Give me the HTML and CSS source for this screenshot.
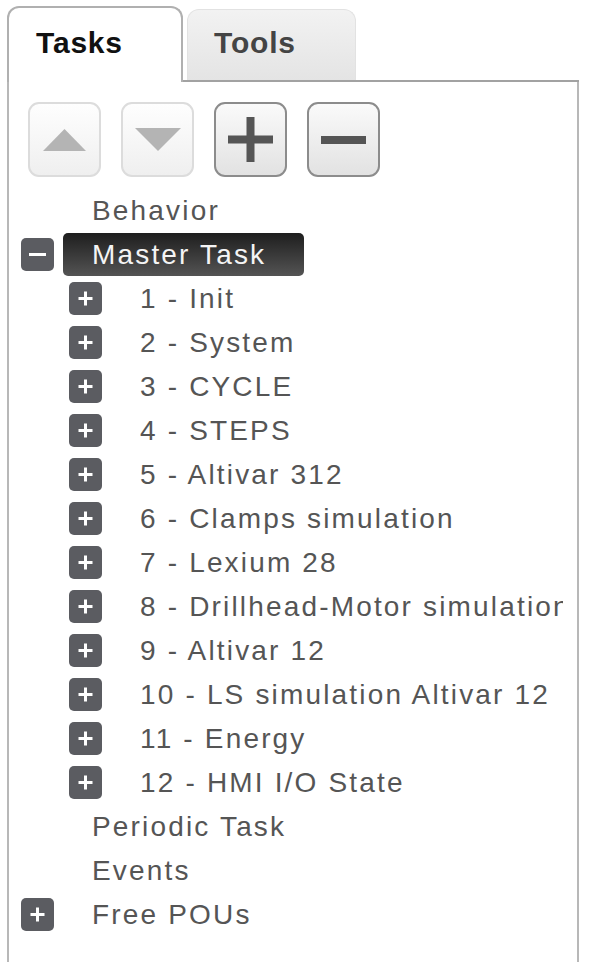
FILE: index.html
```html
<!DOCTYPE html>
<html>
<head>
<meta charset="utf-8">
<link rel="stylesheet" href="styles.css">
</head>
<body>
<div class="panel">
  <div class="tabbar">
    <div class="tab active">Tasks</div>
    <div class="tabrest">
      <div class="tab inactive">Tools</div>
    </div>
  </div>
  <div class="content">
    <div class="toolbar">
      <div class="btn disabled"><svg width="43" height="22" viewBox="0 0 43 22"><polygon points="0,22 43,22 21.5,0" fill="#b4b4b4"/></svg></div>
      <div class="btn disabled"><svg width="46" height="23" viewBox="0 0 46 23"><polygon points="0,0 46,0 23,23" fill="#b4b4b4"/></svg></div>
      <div class="btn enabled"><svg width="45" height="45" viewBox="0 0 45 45"><rect x="0" y="18.5" width="45" height="8" fill="#555"/><rect x="18.5" y="0" width="8" height="45" fill="#555"/></svg></div>
      <div class="btn enabled"><svg width="45" height="8" viewBox="0 0 45 8"><rect x="0" y="0" width="45" height="8" fill="#555"/></svg></div>
    </div>
    <div class="tree">
      <div class="row"><span class="spacer"></span><span class="label">Behavior</span></div>
      <div class="row"><span class="toggle"><svg width="33" height="33" viewBox="0 0 33 33"><path d="M8 16.5H25" stroke="#fff" stroke-width="3"/></svg></span><span class="label selected">Master Task</span></div>
      <div class="row l1"><span class="toggle"><svg width="33" height="33" viewBox="0 0 33 33"><path d="M9.5 16.5H23.5M16.5 9.5V23.5" stroke="#fff" stroke-width="3"/></svg></span><span class="label">1 - Init</span></div>
      <div class="row l1"><span class="toggle"><svg width="33" height="33" viewBox="0 0 33 33"><path d="M9.5 16.5H23.5M16.5 9.5V23.5" stroke="#fff" stroke-width="3"/></svg></span><span class="label">2 - System</span></div>
      <div class="row l1"><span class="toggle"><svg width="33" height="33" viewBox="0 0 33 33"><path d="M9.5 16.5H23.5M16.5 9.5V23.5" stroke="#fff" stroke-width="3"/></svg></span><span class="label">3 - CYCLE</span></div>
      <div class="row l1"><span class="toggle"><svg width="33" height="33" viewBox="0 0 33 33"><path d="M9.5 16.5H23.5M16.5 9.5V23.5" stroke="#fff" stroke-width="3"/></svg></span><span class="label">4 - STEPS</span></div>
      <div class="row l1"><span class="toggle"><svg width="33" height="33" viewBox="0 0 33 33"><path d="M9.5 16.5H23.5M16.5 9.5V23.5" stroke="#fff" stroke-width="3"/></svg></span><span class="label">5 - Altivar 312</span></div>
      <div class="row l1"><span class="toggle"><svg width="33" height="33" viewBox="0 0 33 33"><path d="M9.5 16.5H23.5M16.5 9.5V23.5" stroke="#fff" stroke-width="3"/></svg></span><span class="label">6 - Clamps simulation</span></div>
      <div class="row l1"><span class="toggle"><svg width="33" height="33" viewBox="0 0 33 33"><path d="M9.5 16.5H23.5M16.5 9.5V23.5" stroke="#fff" stroke-width="3"/></svg></span><span class="label">7 - Lexium 28</span></div>
      <div class="row l1"><span class="toggle"><svg width="33" height="33" viewBox="0 0 33 33"><path d="M9.5 16.5H23.5M16.5 9.5V23.5" stroke="#fff" stroke-width="3"/></svg></span><span class="label">8 - Drillhead-Motor simulation</span></div>
      <div class="row l1"><span class="toggle"><svg width="33" height="33" viewBox="0 0 33 33"><path d="M9.5 16.5H23.5M16.5 9.5V23.5" stroke="#fff" stroke-width="3"/></svg></span><span class="label">9 - Altivar 12</span></div>
      <div class="row l1"><span class="toggle"><svg width="33" height="33" viewBox="0 0 33 33"><path d="M9.5 16.5H23.5M16.5 9.5V23.5" stroke="#fff" stroke-width="3"/></svg></span><span class="label">10 - LS simulation Altivar 12</span></div>
      <div class="row l1"><span class="toggle"><svg width="33" height="33" viewBox="0 0 33 33"><path d="M9.5 16.5H23.5M16.5 9.5V23.5" stroke="#fff" stroke-width="3"/></svg></span><span class="label">11 - Energy</span></div>
      <div class="row l1"><span class="toggle"><svg width="33" height="33" viewBox="0 0 33 33"><path d="M9.5 16.5H23.5M16.5 9.5V23.5" stroke="#fff" stroke-width="3"/></svg></span><span class="label">12 - HMI I/O State</span></div>
      <div class="row"><span class="spacer"></span><span class="label">Periodic Task</span></div>
      <div class="row"><span class="spacer"></span><span class="label">Events</span></div>
      <div class="row"><span class="toggle"><svg width="33" height="33" viewBox="0 0 33 33"><path d="M9.5 16.5H23.5M16.5 9.5V23.5" stroke="#fff" stroke-width="3"/></svg></span><span class="label">Free POUs</span></div>
    </div>
  </div>
</div>
</body>
</html>
```
FILE: styles.css
```css
html, body {
  margin: 0;
  padding: 0;
  background: #fff;
}
body {
  font-family: "Liberation Sans", Arial, sans-serif;
}
.panel {
  margin: 6px 0 0 7px;
  width: 572px;
}
.tabbar {
  display: flex;
  height: 76px;
}
.tab {
  box-sizing: border-box;
  font-size: 30px;
  font-weight: bold;
  letter-spacing: 0.8px;
  line-height: 40px;
}
.tab.active {
  width: 176px;
  height: 76px;
  border: 2px solid #b0b0b0;
  border-bottom: none;
  border-radius: 12px 12px 0 0;
  background: #fff;
  color: #111;
  padding: 15px 0 0 27px;
}
.tabrest {
  flex: 1;
  display: flex;
  align-items: flex-end;
  padding-left: 4px;
  border-bottom: 2px solid #a2a2a2;
}
.tab.inactive {
  width: 169px;
  height: 71px;
  border: 1px solid #e2e2e2;
  border-bottom: none;
  border-radius: 12px 12px 0 0;
  background: linear-gradient(#f2f2f2, #e4e4e4);
  color: #444;
  padding: 13px 0 0 26px;
}
.content {
  box-sizing: border-box;
  height: 880px;
  border-left: 2px solid #b8b8b8;
  border-right: 2px solid #b8b8b8;
  padding-top: 20px;
}
.toolbar {
  display: flex;
  gap: 20px;
  padding-left: 19px;
}
.btn {
  box-sizing: border-box;
  width: 73px;
  height: 75px;
  border-radius: 11px;
  display: flex;
  align-items: center;
  justify-content: center;
}
.btn.disabled {
  border: 2px solid #dcdcdc;
  background: linear-gradient(#fefefe, #efefef);
}
.btn.enabled {
  border: 2px solid #8c8c8c;
  background: linear-gradient(#fafafa, #e2e2e2);
}
.tree {
  margin-top: 11px;
  margin-right: 14px;
  overflow: hidden;
}
.row {
  display: flex;
  align-items: center;
  height: 44px;
  padding-left: 12px;
  white-space: nowrap;
}
.row.l1 {
  padding-left: 60px;
}
.toggle, .spacer {
  flex: none;
  width: 33px;
  height: 33px;
  margin-right: 9px;
}
.toggle {
  background: #5b5c61;
  border-radius: 5px;
}
.toggle svg {
  display: block;
}
.label {
  font-size: 28px;
  letter-spacing: 2.17px;
  line-height: 43px;
  color: #555;
  padding: 0 10px 0 29px;
}
.label.selected {
  background: linear-gradient(#1e1e1e, #545454);
  color: #f4f4f4;
  border-radius: 5px;
  padding-right: 38px;
}
```
